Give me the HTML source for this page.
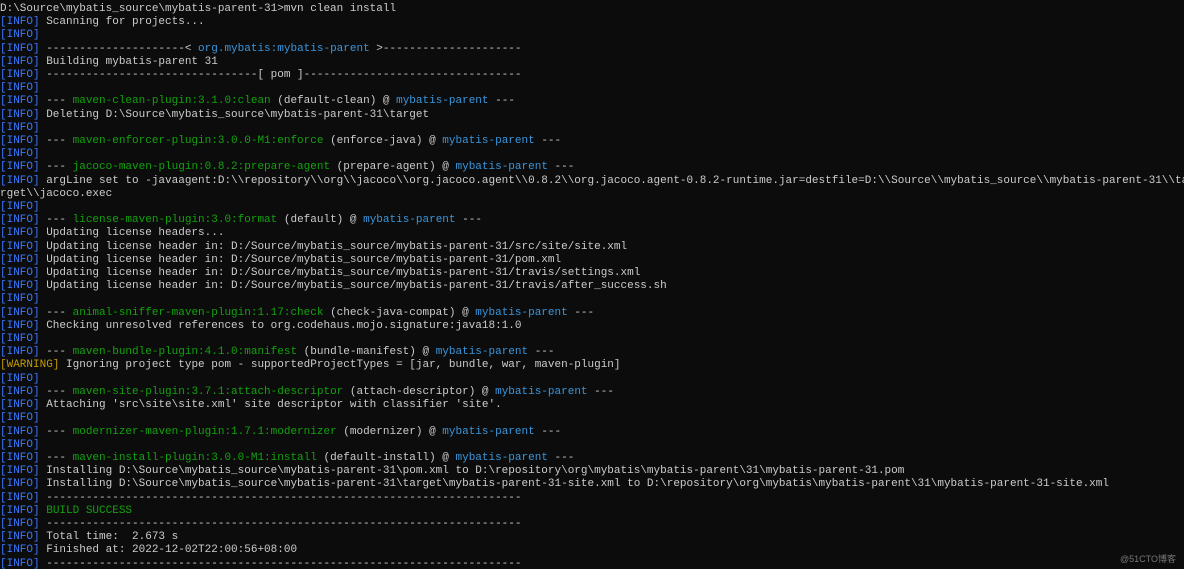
<!DOCTYPE html>
<html><head><meta charset="utf-8"><style>
html,body{margin:0;padding:0;background:#0c0c0c;width:1184px;height:569px;overflow:hidden}
pre{margin:0;padding:3px 0 0 0;font-family:"Liberation Mono","Noto Sans CJK SC",monospace;font-size:11px;line-height:13.2px;color:#cccccc;white-space:pre;overflow:hidden}
.b{color:#3b78ff}.g{color:#13a10e}.c{color:#3a96dd}.y{color:#c19c00}
.wm{position:absolute;right:8px;bottom:4px;font-family:"Liberation Sans","Noto Sans CJK SC",sans-serif;font-size:9px;color:#777}
</style></head><body><pre>D:\Source\mybatis_source\mybatis-parent-31&gt;mvn clean install
<span class="b">[INFO]</span> Scanning for projects...
<span class="b">[INFO]</span>
<span class="b">[INFO]</span> ---------------------&lt; <span class="c">org.mybatis:mybatis-parent</span> &gt;---------------------
<span class="b">[INFO]</span> Building mybatis-parent 31
<span class="b">[INFO]</span> --------------------------------[ pom ]---------------------------------
<span class="b">[INFO]</span>
<span class="b">[INFO]</span> --- <span class="g">maven-clean-plugin:3.1.0:clean</span> (default-clean) @ <span class="c">mybatis-parent</span> ---
<span class="b">[INFO]</span> Deleting D:\Source\mybatis_source\mybatis-parent-31\target
<span class="b">[INFO]</span>
<span class="b">[INFO]</span> --- <span class="g">maven-enforcer-plugin:3.0.0-M1:enforce</span> (enforce-java) @ <span class="c">mybatis-parent</span> ---
<span class="b">[INFO]</span>
<span class="b">[INFO]</span> --- <span class="g">jacoco-maven-plugin:0.8.2:prepare-agent</span> (prepare-agent) @ <span class="c">mybatis-parent</span> ---
<span class="b">[INFO]</span> argLine set to -javaagent:D:\\repository\\org\\jacoco\\org.jacoco.agent\\0.8.2\\org.jacoco.agent-0.8.2-runtime.jar=destfile=D:\\Source\\mybatis_source\\mybatis-parent-31\\ta
rget\\jacoco.exec
<span class="b">[INFO]</span>
<span class="b">[INFO]</span> --- <span class="g">license-maven-plugin:3.0:format</span> (default) @ <span class="c">mybatis-parent</span> ---
<span class="b">[INFO]</span> Updating license headers...
<span class="b">[INFO]</span> Updating license header in: D:/Source/mybatis_source/mybatis-parent-31/src/site/site.xml
<span class="b">[INFO]</span> Updating license header in: D:/Source/mybatis_source/mybatis-parent-31/pom.xml
<span class="b">[INFO]</span> Updating license header in: D:/Source/mybatis_source/mybatis-parent-31/travis/settings.xml
<span class="b">[INFO]</span> Updating license header in: D:/Source/mybatis_source/mybatis-parent-31/travis/after_success.sh
<span class="b">[INFO]</span>
<span class="b">[INFO]</span> --- <span class="g">animal-sniffer-maven-plugin:1.17:check</span> (check-java-compat) @ <span class="c">mybatis-parent</span> ---
<span class="b">[INFO]</span> Checking unresolved references to org.codehaus.mojo.signature:java18:1.0
<span class="b">[INFO]</span>
<span class="b">[INFO]</span> --- <span class="g">maven-bundle-plugin:4.1.0:manifest</span> (bundle-manifest) @ <span class="c">mybatis-parent</span> ---
<span class="y">[WARNING]</span> Ignoring project type pom - supportedProjectTypes = [jar, bundle, war, maven-plugin]
<span class="b">[INFO]</span>
<span class="b">[INFO]</span> --- <span class="g">maven-site-plugin:3.7.1:attach-descriptor</span> (attach-descriptor) @ <span class="c">mybatis-parent</span> ---
<span class="b">[INFO]</span> Attaching 'src\site\site.xml' site descriptor with classifier 'site'.
<span class="b">[INFO]</span>
<span class="b">[INFO]</span> --- <span class="g">modernizer-maven-plugin:1.7.1:modernizer</span> (modernizer) @ <span class="c">mybatis-parent</span> ---
<span class="b">[INFO]</span>
<span class="b">[INFO]</span> --- <span class="g">maven-install-plugin:3.0.0-M1:install</span> (default-install) @ <span class="c">mybatis-parent</span> ---
<span class="b">[INFO]</span> Installing D:\Source\mybatis_source\mybatis-parent-31\pom.xml to D:\repository\org\mybatis\mybatis-parent\31\mybatis-parent-31.pom
<span class="b">[INFO]</span> Installing D:\Source\mybatis_source\mybatis-parent-31\target\mybatis-parent-31-site.xml to D:\repository\org\mybatis\mybatis-parent\31\mybatis-parent-31-site.xml
<span class="b">[INFO]</span> ------------------------------------------------------------------------
<span class="b">[INFO]</span> <span class="g">BUILD SUCCESS</span>
<span class="b">[INFO]</span> ------------------------------------------------------------------------
<span class="b">[INFO]</span> Total time:  2.673 s
<span class="b">[INFO]</span> Finished at: 2022-12-02T22:00:56+08:00
<span class="b">[INFO]</span> ------------------------------------------------------------------------</pre>
<div class="wm">@51CTO博客</div>
</body></html>
